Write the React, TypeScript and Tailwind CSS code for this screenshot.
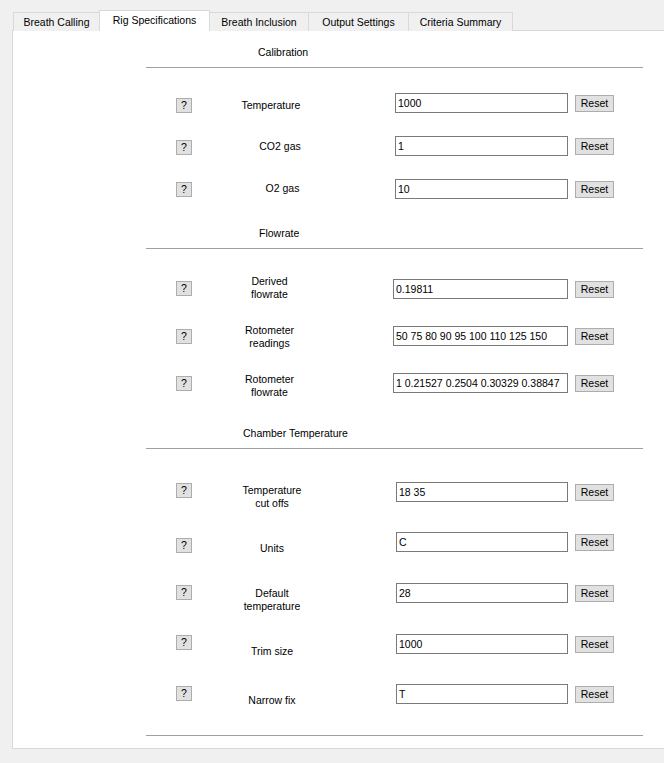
type Row = {
  label: string[];
  value: string;
  rowMt: string;
  qMt: string;
  labelMt: string;
  shift: string;
  input: string;
};

const tabs = [
  { name: "Breath Calling", cls: "w-[86px] border-l" },
  { name: "Rig Specifications", cls: "w-[111px] border-l border-r", active: true },
  { name: "Breath Inclusion", cls: "w-[99px] border-r" },
  { name: "Output Settings", cls: "w-[100px] border-r" },
  { name: "Criteria Summary", cls: "w-[104px] border-r" },
];

const calibration: Row[] = [
  { label: ["Temperature"], value: "1000", rowMt: "mt-[17px]", qMt: "mt-[13px]", labelMt: "mt-[14px]", shift: "", input: "ml-[45px] w-[173px]" },
  { label: ["CO2 gas"], value: "1", rowMt: "mt-[15px]", qMt: "mt-[12px]", labelMt: "mt-[12px]", shift: "pl-[18px]", input: "ml-[45px] w-[173px]" },
  { label: ["O2 gas"], value: "10", rowMt: "mt-[15px]", qMt: "mt-[11px]", labelMt: "mt-[11px]", shift: "pl-[23px]", input: "ml-[45px] w-[173px]" },
];

const flowrate: Row[] = [
  { label: ["Derived", "flowrate"], value: "0.19811", rowMt: "mt-[22px]", qMt: "mt-[10px]", labelMt: "mt-[4px]", shift: "pr-[3px]", input: "ml-[43px] w-[175px]" },
  { label: ["Rotometer", "readings"], value: "50 75 80 90 95 100 110 125 150", rowMt: "mt-[19px]", qMt: "mt-[11px]", labelMt: "mt-[6px]", shift: "pr-[3px]", input: "ml-[43px] w-[175px]" },
  { label: ["Rotometer", "flowrate"], value: "1 0.21527 0.2504 0.30329 0.38847", rowMt: "mt-[19px]", qMt: "mt-[11px]", labelMt: "mt-[8px]", shift: "pr-[3px]", input: "ml-[43px] w-[175px]" },
];

const chamber: Row[] = [
  { label: ["Temperature", "cut offs"], value: "18 35", rowMt: "mt-[25px]", qMt: "mt-[9px]", labelMt: "mt-[10px]", shift: "pl-[2px]", input: "ml-[46px] w-[172px]" },
  { label: ["Units"], value: "C", rowMt: "mt-[22px]", qMt: "mt-[14px]", labelMt: "mt-[18px]", shift: "pl-[2px]", input: "ml-[46px] w-[172px]" },
  { label: ["Default", "temperature"], value: "28", rowMt: "mt-[23px]", qMt: "mt-[10px]", labelMt: "mt-[12px]", shift: "pl-[2px]", input: "ml-[46px] w-[172px]" },
  { label: ["Trim size"], value: "1000", rowMt: "mt-[23px]", qMt: "mt-[9px]", labelMt: "mt-[19px]", shift: "pl-[2px]", input: "ml-[46px] w-[172px]" },
  { label: ["Narrow fix"], value: "T", rowMt: "mt-[22px]", qMt: "mt-[10px]", labelMt: "mt-[18px]", shift: "pl-[2px]", input: "ml-[46px] w-[172px]" },
];

function SettingRow({ row }: { row: Row }) {
  return (
    <div className={`flex h-[28px] items-start ${row.rowMt}`}>
      {/* help button */}
      <button
        className={`ml-[30px] flex h-[15px] w-[16px] items-center justify-center border border-[#adadad] bg-[#e1e1e1] leading-none ${row.qMt}`}
      >
        ?
      </button>
      <div className={`w-[158px] text-center leading-[13px] ${row.labelMt} ${row.shift}`}>
        {row.label.map((l) => (
          <div key={l}>{l}</div>
        ))}
      </div>
      <input
        readOnly
        defaultValue={row.value}
        className={`mt-[8px] h-[20px] border border-[#7a7a7a] bg-white px-[2px] outline-none ${row.input}`}
      />
      <button className="ml-[7px] mt-[10px] flex h-[17px] w-[39px] items-center justify-center border border-[#adadad] bg-[#e1e1e1] leading-none">
        Reset
      </button>
    </div>
  );
}

function Divider({ mt }: { mt: string }) {
  return <div className={`h-px w-[497px] bg-[#a0a0a0] ${mt}`} />;
}

export default function App() {
  return (
    <div className="h-[763px] w-[664px] overflow-hidden bg-[#f0f0f0] font-['Liberation_Sans',Arial,sans-serif] text-[10.5px] text-black">
      {/* Tabs */}
      <div className="ml-[13px] flex h-[31px] items-end pt-[10px]">
        {tabs.map((t) =>
          t.active ? (
            <div
              key={t.name}
              className={`relative z-10 flex h-[21px] items-center justify-center border-t border-[#d9d9d9] bg-white ${t.cls}`}
            >
              {t.name}
            </div>
          ) : (
            <div
              key={t.name}
              className={`flex h-[19px] items-center justify-center border-t border-[#d9d9d9] bg-[#f0f0f0] pt-[1px] ${t.cls}`}
            >
              {t.name}
            </div>
          )
        )}
      </div>

      {/* Panel */}
      <div className="-mt-px ml-[12px] h-[719px] border-b border-l border-t border-[#d9d9d9] bg-white">
        <div className="ml-[133px] flex w-[497px] flex-col">
          <div className="ml-[112px] mt-[15px] leading-[13px]">Calibration</div>
          <Divider mt="mt-[8px]" />
          {calibration.map((r) => (
            <SettingRow key={r.label.join()} row={r} />
          ))}

          <div className="ml-[113px] mt-[28px] leading-[13px]">Flowrate</div>
          <Divider mt="mt-[8px]" />
          {flowrate.map((r) => (
            <SettingRow key={r.label.join()} row={r} />
          ))}

          <div className="ml-[97px] mt-[34px] leading-[13px]">Chamber Temperature</div>
          <Divider mt="mt-[8px]" />
          {chamber.map((r) => (
            <SettingRow key={r.label.join()} row={r} />
          ))}

          <Divider mt="mt-[31px]" />
        </div>
      </div>
    </div>
  );
}
